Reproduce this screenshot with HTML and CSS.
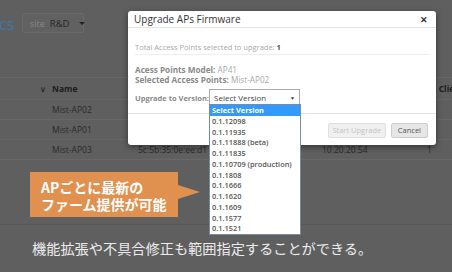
FILE: index.html
```html
<!DOCTYPE html>
<html>
<head>
<meta charset="utf-8">
<link rel="stylesheet" href="styles.css">
</head>
<body>
<div class="stage">
  <div class="app">
    <div class="topbar">
      <span class="page-title">cs</span>
      <div class="site-select"><span class="site-label">site</span><span class="site-value">R&amp;D</span><span class="site-caret"></span></div>
    </div>
    <div class="table">
      <div class="row head">
        <span class="c-chev">∨</span><span class="c-name">Name</span><span class="c-mac"></span><span class="c-ip"></span><span class="c-cl">. Clients</span>
      </div>
      <div class="row"><span class="c-chev"></span><span class="c-name">Mist-AP02</span><span class="c-mac"></span><span class="c-ip"></span><span class="c-cl"></span></div>
      <div class="row"><span class="c-chev"></span><span class="c-name">Mist-AP01</span><span class="c-mac"></span><span class="c-ip"></span><span class="c-cl"></span></div>
      <div class="row"><span class="c-chev"></span><span class="c-name">Mist-AP03</span><span class="c-mac">5c:5b:35:0e:ee:d1</span><span class="c-ip">10.20.20.54</span><span class="c-cl">1</span></div>
    </div>
  </div>
  <div class="caption">機能拡張や不具合修正も範囲指定することができる。</div>

  <div class="modal">
    <div class="modal-header"><span class="modal-title">Upgrade APs Firmware</span><span class="modal-close">✕</span></div>
    <div class="modal-body">
      <div class="total">Total Access Points selected to upgrade: <b>1</b></div>
      <div class="info"><b>Acess Points Model:</b> AP41</div>
      <div class="info"><b>Selected Access Points:</b> Mist-AP02</div>
      <div class="ver-row"><b class="ver-label">Upgrade to Version:</b><div class="select"><span>Select Version</span><span class="sel-caret">▼</span></div></div>
    </div>
    <div class="modal-footer">
      <span class="btn disabled">Start Upgrade</span><span class="btn">Cancel</span>
    </div>
  </div>

  <ul class="options">
    <li class="active">Select Version</li>
    <li>0.1.12098</li>
    <li>0.1.11935</li>
    <li>0.1.11888 (beta)</li>
    <li>0.1.11835</li>
    <li>0.1.10709 (production)</li>
    <li>0.1.1808</li>
    <li>0.1.1666</li>
    <li>0.1.1620</li>
    <li>0.1.1609</li>
    <li>0.1.1577</li>
    <li>0.1.1521</li>
  </ul>

  <div class="callout">APごとに最新の<br>ファーム提供が可能</div>
</div>
</body>
</html>
```

FILE: styles.css
```css
* { box-sizing: border-box; }
html, body { margin: 0; padding: 0; }
body {
  width: 452px;
  height: 272px;
  overflow: hidden;
  background: #5f5f5f;
  font-family: "Open Sans", "Noto Sans", sans-serif;
}
.stage {
  position: relative;
  width: 452px;
  height: 272px;
}
.app {
  height: 225px;
  border-bottom: 1px solid #575757;
}
.topbar {
  height: 78px;
  display: flex;
  align-items: flex-start;
  padding-top: 13px;
  border-bottom: 1px solid #686868;
}
.page-title {
  font-size: 16px;
  color: #4275a8;
  line-height: 22px;
  width: 23px;
  margin-left: -1px;
  white-space: nowrap;
}
.site-select {
  display: flex;
  align-items: center;
  width: 62px;
  height: 20px;
  border: 1px solid #696969;
  background: #616161;
  border-radius: 2px;
  padding-left: 7px;
  font-size: 9px;
}
.site-label { color: #888888; margin-right: 5px; }
.site-value { color: #262626; font-size: 9.5px; }
.site-caret {
  margin-left: 9px;
  width: 0; height: 0;
  border-left: 3px solid transparent;
  border-right: 3px solid transparent;
  border-top: 3px solid #222;
}
.table { font-size: 8.5px; color: #2a2a2a; }
.row {
  display: flex;
  align-items: center;
  height: 20px;
  border-bottom: 1px solid #686868;
}
.row > span { flex-shrink: 0; }
.row.head { height: 22px; font-weight: 700; color: #1c1c1c; }
.c-chev { width: 52px; padding-left: 40px; font-size: 8px; font-weight: 400; }
.c-name { width: 86px; }
.c-mac { width: 184px; }
.c-ip { width: 105px; }
.c-cl { white-space: nowrap; }
.row.head .c-cl { margin-left: 7px; }
.caption {
  padding-left: 32px;
  padding-top: 13px;
  font-family: "Noto Sans CJK JP", sans-serif;
  font-size: 14.2px;
  color: #ececec;
  line-height: 20px;
}
.modal {
  position: absolute;
  left: 128px;
  top: 11px;
  width: 308px;
  height: 134px;
  background: #fff;
  border-radius: 3px;
  box-shadow: 0 2px 6px rgba(0,0,0,0.45);
  display: flex;
  flex-direction: column;
  color: #333;
}
.modal-header {
  height: 17px;
  display: flex;
  align-items: center;
  justify-content: space-between;
  padding: 0 8px 0 6px;
  border-bottom: 1px solid #e3e3e3;
}
.modal-title { font-size: 10px; color: #333; }
.modal-close { font-size: 9px; font-weight: 700; color: #333; }
.modal-body {
  padding: 14px 7px 0 7px;
  font-size: 8.2px;
  color: #a8a8a8;
  flex: 1;
}
.modal-body b { color: #8a8a8a; font-weight: 700; }
.total {
  font-size: 7.5px;
  line-height: 10px;
  padding-bottom: 2px;
  border-bottom: 1px solid #eeeeee;
  margin-bottom: 10px;
}
.total b { color: #555; }
.info { line-height: 10px; }
.ver-row {
  display: flex;
  align-items: center;
  margin-top: 4px;
  height: 17px;
}
.ver-label { width: 74px; font-size: 7.5px; white-space: nowrap; }
.select {
  width: 91px;
  height: 17px;
  border: 1px solid #aaaaaa;
  display: flex;
  align-items: center;
  justify-content: space-between;
  padding: 0 4px;
  font-size: 8px;
  color: #444;
}
.sel-caret { font-size: 5px; color: #333; }
.modal-footer {
  height: 32px;
  border-top: 1px solid #e5e5e5;
  display: flex;
  justify-content: flex-end;
  align-items: flex-start;
  padding: 9px 8px 0 0;
  gap: 5px;
}
.btn {
  height: 15px;
  line-height: 13px;
  border: 1px solid #cccccc;
  border-radius: 2px;
  background: #e6e6e6;
  padding: 0 6px;
  font-size: 7.5px;
  color: #555;
  white-space: nowrap;
}
.btn.disabled {
  width: 58px;
  padding: 0;
  text-align: center;
  background: #f0f0f0;
  border-color: #e0e0e0;
  color: #c4c4c4;
}
.options {
  position: absolute;
  left: 209px;
  top: 104px;
  width: 92px;
  margin: 0;
  padding: 0;
  list-style: none;
  background: #fff;
  border: 1px solid #7a8aa0;
}
.options li {
  height: 10.75px;
  line-height: 10.75px;
  padding-left: 2px;
  font-size: 7.4px;
  font-weight: 600;
  color: #555;
  white-space: nowrap;
}
.options li.active { background: #3399ff; color: #fff; font-weight: 700; }
.callout {
  position: absolute;
  left: 30px;
  top: 172px;
  width: 148px;
  height: 45px;
  background: #e0904f;
  color: #fff;
  font-family: "Noto Sans CJK JP", sans-serif;
  font-weight: 700;
  font-size: 14px;
  line-height: 17px;
  padding: 7px 0 0 11px;
}
.callout::after {
  content: "";
  position: absolute;
  left: 148px;
  top: 13px;
  border-left: 22px solid #e0904f;
  border-top: 7px solid transparent;
  border-bottom: 7px solid transparent;
}
```
